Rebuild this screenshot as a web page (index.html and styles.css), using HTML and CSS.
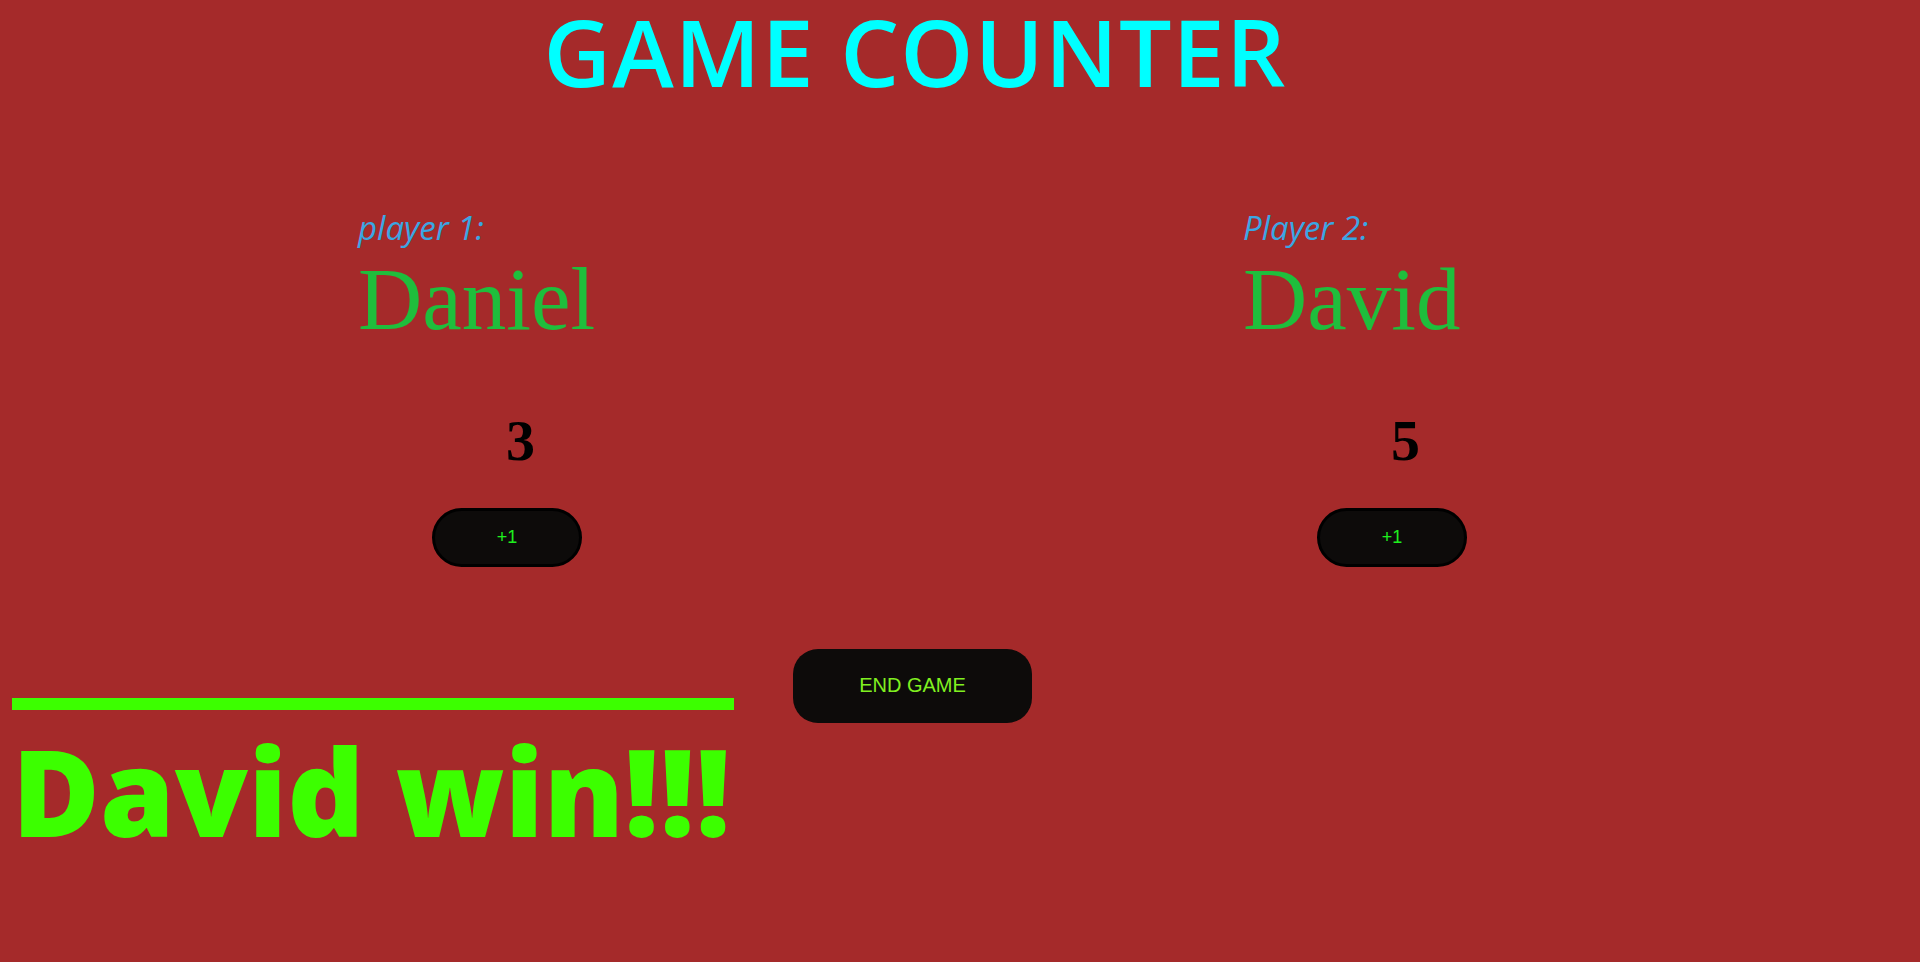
FILE: index.html
```html
<!DOCTYPE html>
<html lang="en">
<head>
<meta charset="utf-8">
<title>Game Counter</title>
<link rel="stylesheet" href="styles.css">
</head>
<body>
<div class="page">
  <h1 class="title">GAME COUNTER</h1>
  <div class="players">
    <div class="player">
      <p class="label">player 1:</p>
      <div class="name">Daniel</div>
      <div class="score">3</div>
      <button class="plus">+1</button>
    </div>
    <div class="player">
      <p class="label">Player 2:</p>
      <div class="name">David</div>
      <div class="score">5</div>
      <button class="plus">+1</button>
    </div>
  </div>
  <div class="bottom">
    <div class="result">
      <hr class="line">
      <div class="winner">David win<span class="bang">!!!</span></div>
    </div>
    <button class="end">END GAME</button>
  </div>
</div>
</body>
</html>
```
FILE: styles.css
```css
html {
  background: #ffffff;
}
body {
  margin: 0;
}
.page {
  height: 962px;
  background: #a52a2a;
  overflow: hidden;
}
.title {
  margin: 0;
  padding: 5px 90px 0 0;
  text-align: center;
  font: 600 93px/1 "Open Sans", sans-serif;
  letter-spacing: 1.2px;
  color: #00ffff;
}
.players {
  display: flex;
  gap: 585px;
  margin-top: 110px;
  padding-left: 358px;
}
.player {
  width: 300px;
  display: flex;
  flex-direction: column;
  align-items: flex-start;
}
.label {
  margin: 0;
  font: italic 400 33px/1.2 "Open Sans", sans-serif;
  color: #3aa6e3;
}
.name {
  margin-top: 7px;
  font: 400 89px/1 "Liberation Serif", serif;
  color: #1fbe3c;
}
.score {
  margin: 68px 0 0 148px;
  font: 700 58px/1 "Liberation Serif", serif;
  color: #000000;
}
.plus {
  margin: 38px 0 0 74px;
  width: 150px;
  height: 59px;
  border: 3px solid #000000;
  border-radius: 30px;
  background: #0d0b0a;
  color: #1ef01e;
  font: 400 18px "Liberation Sans", Arial, sans-serif;
  padding: 0;
}
.bottom {
  display: flex;
  align-items: flex-start;
  margin-top: 82px;
}
.result {
  margin-left: 12px;
  margin-top: 49px;
  width: 722px;
}
.line {
  height: 12px;
  margin: 0;
  border: 0;
  background: #3cff00;
}
.winner {
  margin-top: 21px;
  font: 800 120px/1 "Open Sans", sans-serif;
  color: #3cff00;
  white-space: nowrap;
}
.bang {
  letter-spacing: 1px;
}
.end {
  margin-left: 59px;
  width: 239px;
  height: 74px;
  border: 0;
  border-radius: 25px;
  background: #0d0b0a;
  color: #80f020;
  font: 400 20px "Liberation Sans", Arial, sans-serif;
  padding: 0;
}
```
